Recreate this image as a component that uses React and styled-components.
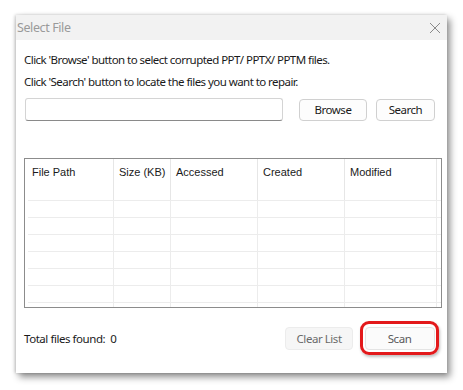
import React from "react";
import styled, { createGlobalStyle } from "styled-components";

const Global = createGlobalStyle`
  html, body { margin: 0; padding: 0; background: #ffffff; }
  body { font-family: "Noto Sans", "Open Sans", sans-serif; }
  #root { width: 463px; height: 390px; overflow: hidden; }
`;

const Page = styled.div`
  padding: 15px 0 0 16px;
`;

const Dialog = styled.div`
  width: 431px;
  height: 358px;
  background: #ffffff;
  box-shadow: 3px 4px 7px rgba(0, 0, 0, 0.45), -1px 0 3px rgba(0, 0, 0, 0.2);
  display: flex;
  flex-direction: column;
`;

const TitleBar = styled.div`
  height: 25px;
  background: #f2f2f2;
  display: flex;
  align-items: center;
  justify-content: space-between;
  padding: 0 6px 0 1px;
  flex-shrink: 0;
`;

const Title = styled.span`
  font-size: 12.5px;
  letter-spacing: -0.4px;
  color: #9a9a9a;
`;

const Body = styled.div`
  padding: 9px 8px 0 8px;
  display: flex;
  flex-direction: column;
  flex: 1;
`;

const Line = styled.div`
  font-size: 11.5px;
  letter-spacing: -0.55px;
  line-height: 22px;
  color: #1a1a1a;
`;

const InputRow = styled.div`
  display: flex;
  align-items: center;
  margin-top: 5px;
`;

const TextField = styled.div`
  width: 256px;
  height: 21px;
  margin-left: 1px;
  border: 1px solid #d4d4d4;
  border-bottom: 1px solid #8a8a8a;
  border-radius: 3px;
  background: #fff;
`;

const Button = styled.button`
  height: 22px;
  width: ${(p) => p.$w}px;
  margin-left: ${(p) => p.$ml}px;
  border: 1px solid #d0d0d0;
  border-radius: 4px;
  background: #fdfdfd;
  font-family: "Noto Sans", "Open Sans", sans-serif;
  font-size: 11.5px;
  letter-spacing: -0.5px;
  color: #1a1a1a;
  padding: 0;
`;

const Table = styled.div`
  margin-top: 37px;
  width: 413px;
  height: 148px;
  border: 1px solid #8c8c8c;
  overflow: hidden;
  padding-left: 3px;
  box-sizing: content-box;
`;

const Row = styled.div`
  display: grid;
  grid-template-columns: 86px 57px 87px 87px 92px;
  height: ${(p) => p.$h}px;
  border-bottom: 1px solid #ececec;
`;

const HeadCell = styled.div`
  border-right: 1px solid #e6e6e6;
  font-family: "Liberation Sans", Arial, sans-serif;
  font-size: 11px;
  color: #1a1a1a;
  padding: 7px 0 0 ${(p) => (p.$first ? 4 : 5)}px;
`;

const Cell = styled.div`
  border-right: 1px solid #ececec;
`;

const Footer = styled.div`
  display: flex;
  align-items: center;
  margin-top: 13px;
`;

const Total = styled.span`
  font-size: 11.5px;
  letter-spacing: -0.45px;
  color: #1a1a1a;
  width: 265px;
`;

const ClearButton = styled.button`
  width: 69px;
  height: 23px;
  border: 1px solid #ececec;
  border-radius: 4px;
  background: #f6f6f6;
  color: #6a6a6a;
  font-family: "Noto Sans", "Open Sans", sans-serif;
  font-size: 11.5px;
  letter-spacing: -0.45px;
  padding: 0;
`;

const Highlight = styled.div`
  margin-left: 7px;
  width: 74px;
  height: 28px;
  border: 3.5px solid #e3191b;
  border-radius: 9px;
  display: flex;
  align-items: center;
  justify-content: center;
  box-shadow: 1px 2px 3px rgba(0, 0, 0, 0.25);
`;

const ScanButton = styled.button`
  width: 70px;
  height: 23px;
  border: 1px solid #e4e4e4;
  border-radius: 4px;
  background: #fbfbfb;
  color: #5a5a5a;
  font-family: "Noto Sans", "Open Sans", sans-serif;
  font-size: 11.5px;
  letter-spacing: -0.45px;
  padding: 0;
`;

const cols = ["File Path", "Size (KB)", "Accessed", "Created", "Modified"];

export default function App() {
  return (
    <>
      <Global />
      <Page>
        <Dialog>
          <TitleBar>
            <Title>Select File</Title>
            <svg width="12" height="12" viewBox="0 0 12 12">
              <path d="M1 1 L11 11 M11 1 L1 11" stroke="#8a8a8a" strokeWidth="1" fill="none" />
            </svg>
          </TitleBar>
          <Body>
            <Line>Click 'Browse' button to select corrupted PPT/ PPTX/ PPTM files.</Line>
            <Line>Click 'Search' button to locate the files you want to repair.</Line>
            <InputRow>
              <TextField />
              <Button $w={68} $ml={16}>Browse</Button>
              <Button $w={59} $ml={9}>Search</Button>
            </InputRow>
            <Table>
              <Row $h={41}>
                {cols.map((c, i) => (
                  <HeadCell key={c} $first={i === 0}>{c}</HeadCell>
                ))}
              </Row>
              {Array.from({ length: 7 }).map((_, r) => (
                <Row key={r} $h={16}>
                  {cols.map((c) => (
                    <Cell key={c} />
                  ))}
                </Row>
              ))}
            </Table>
            <Footer>
              <Total>Total files found:&nbsp;&nbsp;0</Total>
              <ClearButton>Clear List</ClearButton>
              <Highlight>
                <ScanButton>Scan</ScanButton>
              </Highlight>
            </Footer>
          </Body>
        </Dialog>
      </Page>
    </>
  );
}
